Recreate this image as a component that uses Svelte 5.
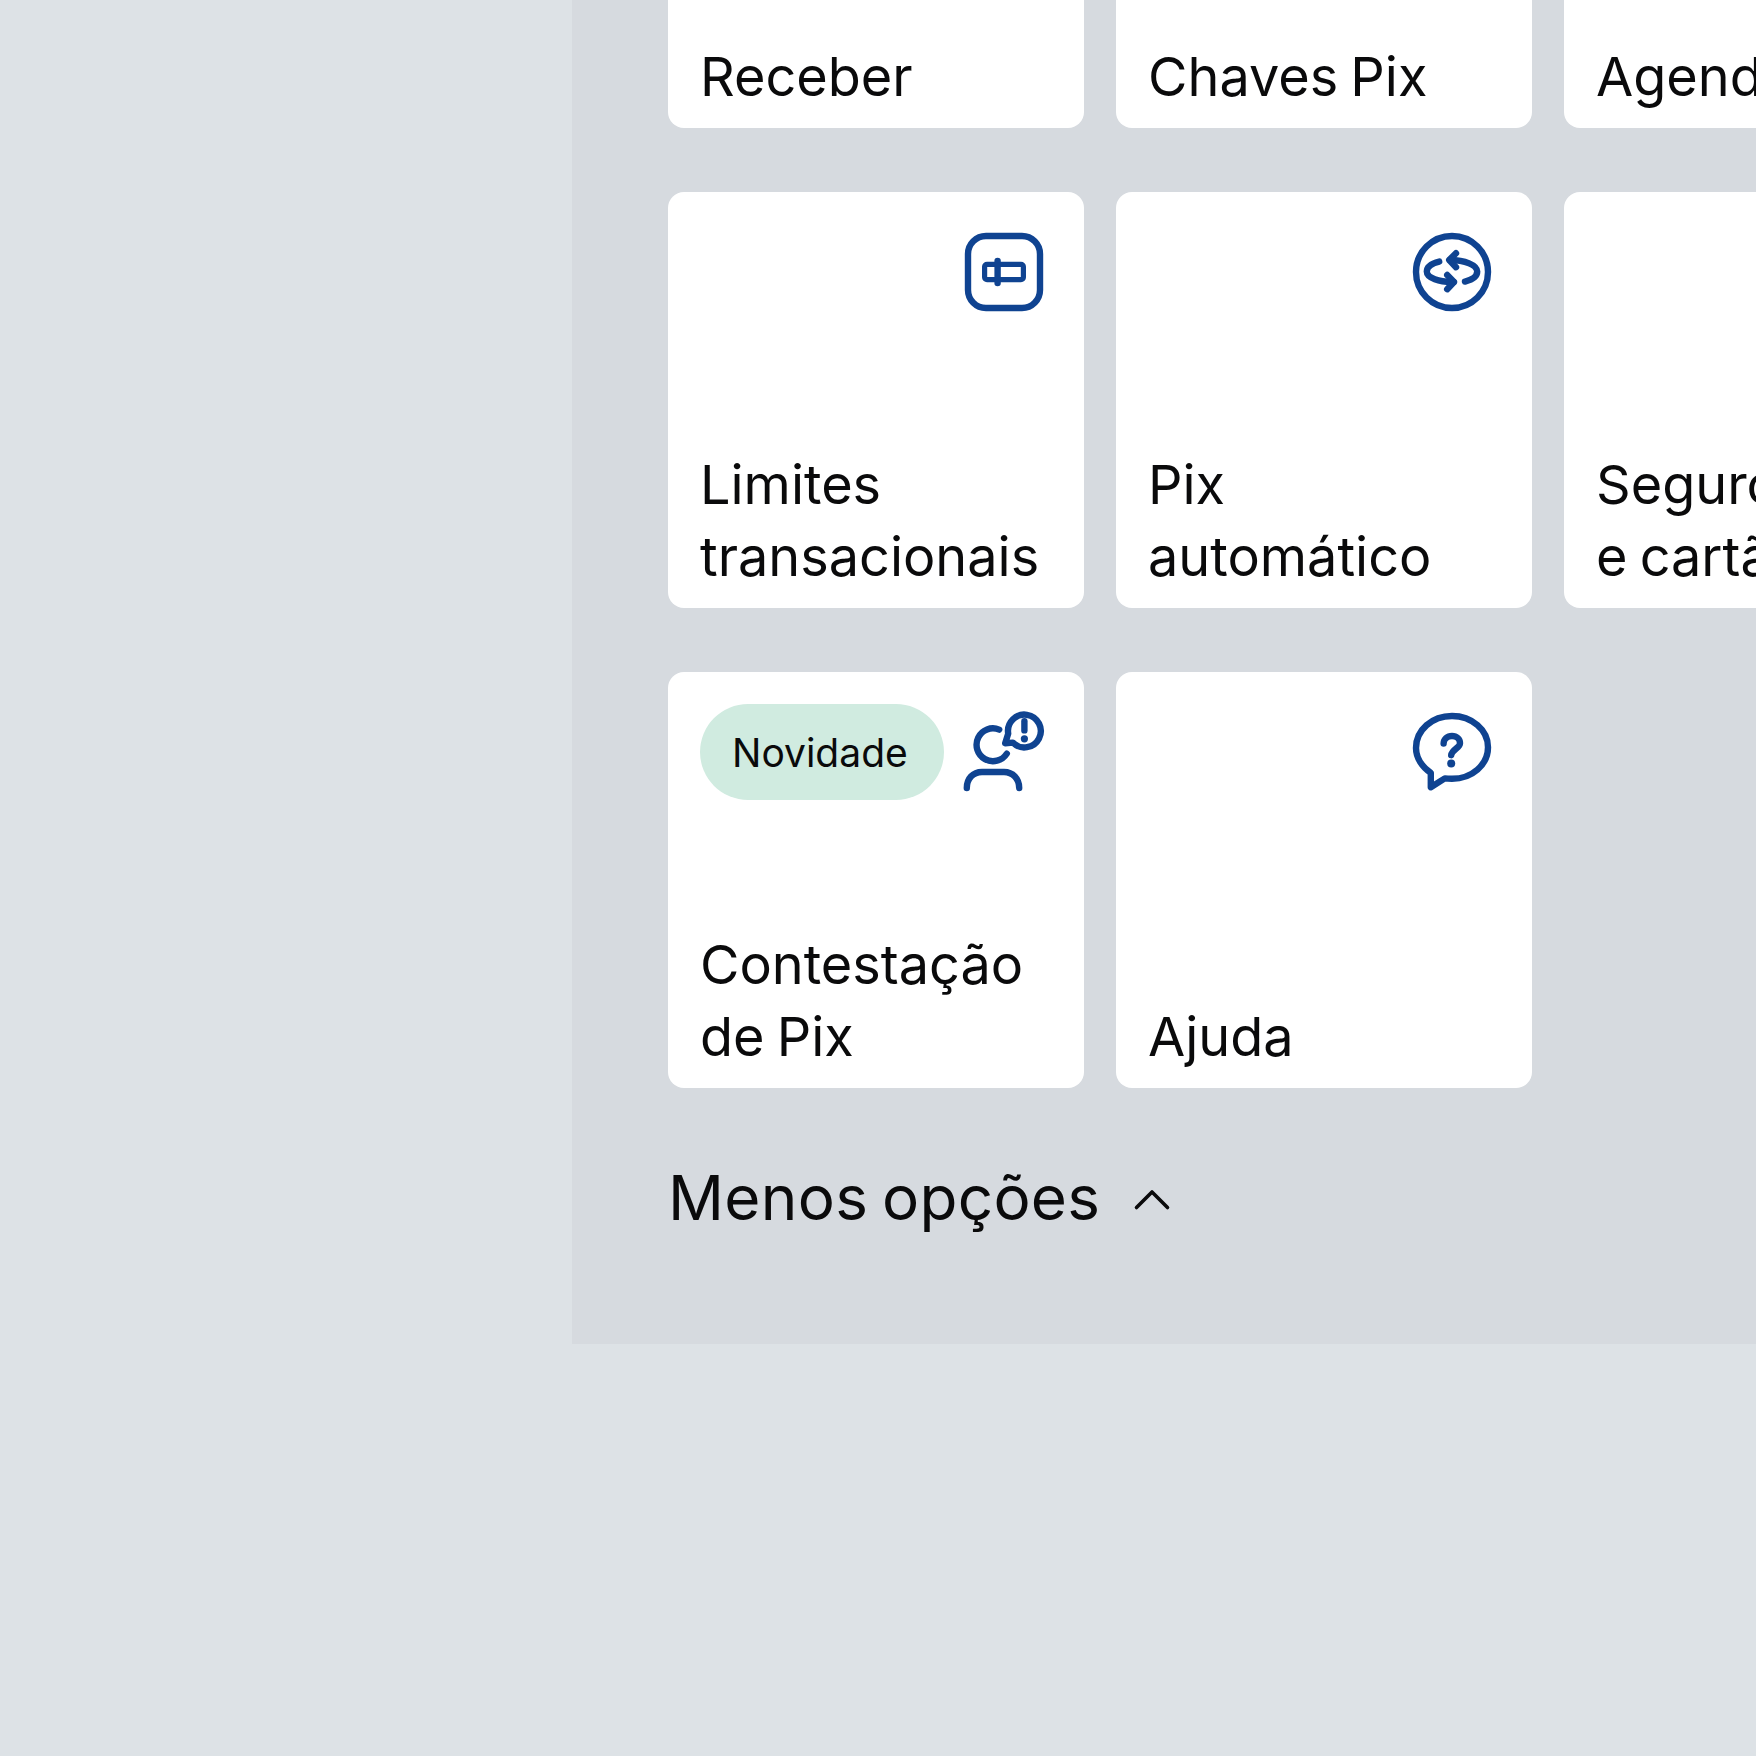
<script>
  const cards = [
    { label: 'Receber' },
    { label: 'Chaves Pix' },
    { label: 'Agendamentos' },
    { label: 'Limites\ntransacionais', icon: 'limits' },
    { label: 'Pix\nautomático', icon: 'auto' },
    { label: 'Seguro Pix\ne cartão' },
    { label: 'Contestação\nde Pix', icon: 'dispute', badge: 'Novidade' },
    { label: 'Ajuda', icon: 'help' }
  ];
</script>

<div class="page">
  <section class="panel">
    <div class="grid">
      {#each cards as card}
        <button class="card">
          <div class="card-top">
            {#if card.badge}
              <span class="badge">{card.badge}</span>
            {/if}
            {#if card.icon}
              <svg class="icon" viewBox="0 0 24 24" fill="none" stroke="currentColor" stroke-width="1.6" stroke-linecap="round" stroke-linejoin="round">
                {#if card.icon === 'limits'}
                  <rect x="3" y="3" width="18" height="18" rx="4.5" />
                  <rect x="7.15" y="10.1" width="9.7" height="3.8" rx="0.6" stroke-width="1.3" />
                  <path d="M10.4 9.25v5.5" />
                {:else if card.icon === 'auto'}
                  <circle cx="12" cy="12" r="9" />
                  <path d="M15.25 14.4c1.95-.5 3.05-1.4 3.05-2.5 0-1.6-3.1-2.9-6.8-2.9" />
                  <path d="M13 7.3 11.3 9l1.7 1.8" />
                  <path d="M8.8 9.4c-2 .5-3.1 1.4-3.1 2.5 0 1.6 3.1 2.7 6.7 2.6" />
                  <path d="M10.8 12.75l1.7 1.75-1.7 1.8" />
                {:else if card.icon === 'dispute'}
                  <path d="M10.8 6.4A4.1 4.1 0 1 0 12.7 12.4" />
                  <path d="M2.7 21c0-2.3 1.5-4 3.8-4H12c2.2 0 3.8 1.7 3.8 4" />
                  <path d="M12.3 9.8l1.9-.15A4.1 4.1 0 1 0 13.05 7.4z" />
                  <path d="M17.1 4.3v2.3" />
                  <circle cx="17.1" cy="8.7" r="0.9" fill="currentColor" stroke="none" />
                {:else if card.icon === 'help'}
                  <path d="M6.7 17.2C4.5 15.7 3 13.4 3 11c0-4.500 4-8 9-8s9 3.500 9 7.800c0 4.400-4 7.900-9 7.900-.7 0-1.200 0-1.800-.1l-3.500 2.200z" />
                  <path d="M9.900 9.900c0-1.100.9-1.900 2.100-1.900s2 .8 2 1.800c0 1.200-2 1.500-2.200 3" />
                  <circle cx="11.8" cy="14.9" r="1" fill="currentColor" stroke="none" />
                {/if}
              </svg>
            {/if}
          </div>
          <span class="label">{card.label}</span>
        </button>
      {/each}
    </div>

    <button class="toggle">
      <span class="toggle-text">Menos opções</span>
      <svg class="chevron" viewBox="0 0 48 48" fill="none" stroke="currentColor" stroke-width="3.6" stroke-linecap="round" stroke-linejoin="round">
        <path d="M8.5 31.500 24 16l15.500 15.500" />
      </svg>
    </button>
  </section>
</div>

<style>
  :global(body) { margin: 0; background: #dde2e6; }

  .page {
    height: 1756px;
    overflow: hidden;
    padding-left: 572px;
    font-family: Inter, "Liberation Sans", sans-serif;
    color: #0a0a0b;
  }

  .panel {
    display: flex;
    flex-direction: column;
    align-items: flex-start;
    gap: 70px;
    height: 1728px;
    margin-top: -384px;
    padding: 96px 0 0 96px;
    box-sizing: border-box;
    background: #d6dadf;
  }

  .grid {
    display: grid;
    grid-template-columns: repeat(3, 416px);
    grid-auto-rows: 416px;
    gap: 64px 32px;
  }

  .card {
    display: flex;
    flex-direction: column;
    justify-content: space-between;
    box-sizing: border-box;
    padding: 32px 32px 15px;
    border: 0;
    border-radius: 16px;
    background: #fff;
    color: inherit;
    font: inherit;
    text-align: left;
  }

  .card-top {
    display: flex;
    justify-content: space-between;
    align-items: flex-start;
  }

  .card-top .icon { margin-left: auto; }

  .icon {
    display: block;
    width: 96px;
    height: 96px;
    color: #0f4391;
  }

  .badge {
    display: flex;
    align-items: center;
    height: 96px;
    padding: 0 36px 0 32px;
    border-radius: 48px;
    background: #d0ebe0;
    font-size: 39px;
  }

  .label {
    font-size: 54px;
    line-height: 72px;
    word-spacing: -3px;
    white-space: pre-line;
  }

  .toggle {
    display: flex;
    align-items: center;
    gap: 28px;
    padding: 0;
    border: 0;
    background: none;
    color: inherit;
    font: inherit;
    font-size: 62px;
    line-height: 80px;
  }

  .toggle-text { word-spacing: -4px; letter-spacing: 0.3px; }

  .chevron {
    width: 48px;
    height: 48px;
    margin-top: 4px;
  }
</style>
